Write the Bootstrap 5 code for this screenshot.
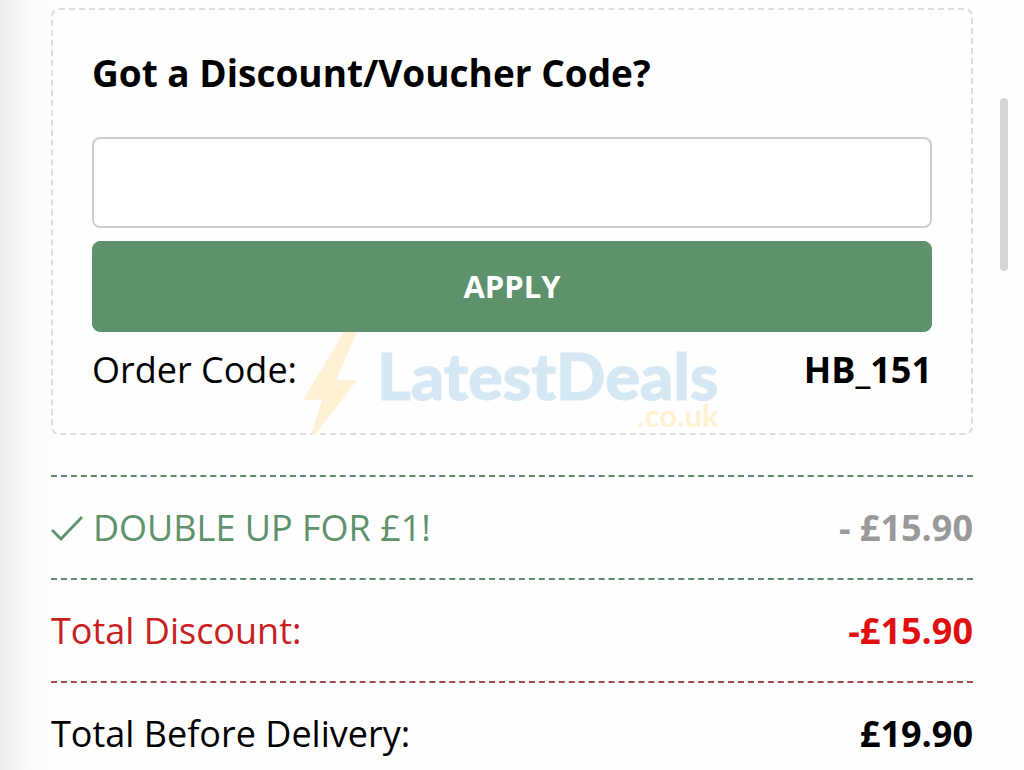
<!DOCTYPE html>
<html lang="en">
<head>
<meta charset="utf-8">
<meta name="viewport" content="width=device-width, initial-scale=1">
<title>Basket summary</title>
<link href="https://cdn.jsdelivr.net/npm/bootstrap@5.3.0/dist/css/bootstrap.min.css" rel="stylesheet">
<style>
  body {
    font-family: "Open Sans", "Noto Sans", sans-serif;
    font-size: 36px;
    line-height: 50px;
    color: #000;
    background: linear-gradient(to right, #ededed 0, #fafafa 28px, #fefefe 56px, #fefefe 100%);
    overflow: hidden;
  }
  .summary { padding: 8px 51px 0; }
  .voucher { border: 2px dashed #dcdcdc; border-radius: 8px; padding: 38px 39px; }
  .voucher-title { font-size: 37px; line-height: 50px; font-weight: 700; margin-bottom: 39px; }
  .voucher-input { height: 91px; border: 2px solid #ccc; border-radius: 8px; font-size: 36px; margin-bottom: 13px; }
  .voucher-apply {
    height: 91px; border-radius: 8px; font-size: 31px; font-weight: 700;
    --bs-btn-color: #fff; --bs-btn-bg: #5e926c; --bs-btn-border-color: #5e926c;
    --bs-btn-hover-color: #fff; --bs-btn-hover-bg: #4f805d; --bs-btn-hover-border-color: #4f805d;
  }
  .order-row { margin-top: 13px; }
  .totals { margin-top: 40px; }
  .total-row { height: 103px; border-top: 2px dashed; }
  .line-green { color: #5e926c; border-color: #5e8a6b; }
  .line-red { color: #c8201f; border-color: #5e8a6b; }
  .line-final { border-color: #a34a50; }
  .price-grey { color: #999; }
  .price-red { color: #e01010; }
  .tick { width: 32px; height: 26px; margin-right: 10px; }
  .watermark { left: 250px; bottom: -2px; pointer-events: none; }
  .watermark-bolt { width: 54px; height: 103px; margin-right: 20px; }
  .watermark-text { padding-bottom: 6px; }
  .watermark-name { font-family: Lato, sans-serif; font-weight: 900; font-size: 65px; line-height: 60px; color: #d5e8f4; -webkit-text-stroke: 1px #d5e8f4; }
  .watermark-tld { font-family: Lato, sans-serif; font-weight: 700; font-size: 31px; line-height: 28px; color: #fdf1d2; margin-top: -4px; }
  .scroll-thumb { right: 16px; top: 98px; width: 8px; height: 173px; border-radius: 4px; background: #d5d5d5; }
</style>
</head>
<body>
<main class="summary">
  <form class="voucher position-relative">
    <div class="watermark position-absolute d-flex align-items-end" aria-hidden="true">
      <svg class="watermark-bolt" viewBox="0 0 54 103"><path d="M41 0H54L33 48H54L12 103H8L19 68H0Z" fill="#fdf0d3"/></svg>
      <div class="watermark-text d-flex flex-column align-items-end">
        <span class="watermark-name">LatestDeals</span>
        <span class="watermark-tld">.co.uk</span>
      </div>
    </div>
    <h2 class="voucher-title"><label for="code">Got a Discount/Voucher Code?</label></h2>
    <input class="form-control voucher-input" id="code" type="text">
    <button class="btn voucher-apply w-100" type="button">APPLY</button>
    <div class="order-row position-relative d-flex justify-content-between">
      <span>Order Code:</span>
      <strong>HB_151</strong>
    </div>
  </form>
  <section class="totals">
    <div class="total-row line-green d-flex justify-content-between align-items-center">
      <span class="d-flex align-items-center">
        <svg class="tick" viewBox="0 0 32 26" fill="none" stroke="currentColor" stroke-width="2.8"><path d="M1 15L10 24L31 2"/></svg>
        DOUBLE UP FOR £1!
      </span>
      <strong class="price-grey">- £15.90</strong>
    </div>
    <div class="total-row line-green line-red d-flex justify-content-between align-items-center">
      <span>Total Discount:</span>
      <strong class="price-red">-£15.90</strong>
    </div>
    <div class="total-row line-final d-flex justify-content-between align-items-center">
      <span>Total Before Delivery:</span>
      <strong>£19.90</strong>
    </div>
  </section>
</main>
<div class="scroll-thumb position-fixed"></div>
<script src="https://cdn.jsdelivr.net/npm/bootstrap@5.3.0/dist/js/bootstrap.bundle.min.js"></script>
</body>
</html>
